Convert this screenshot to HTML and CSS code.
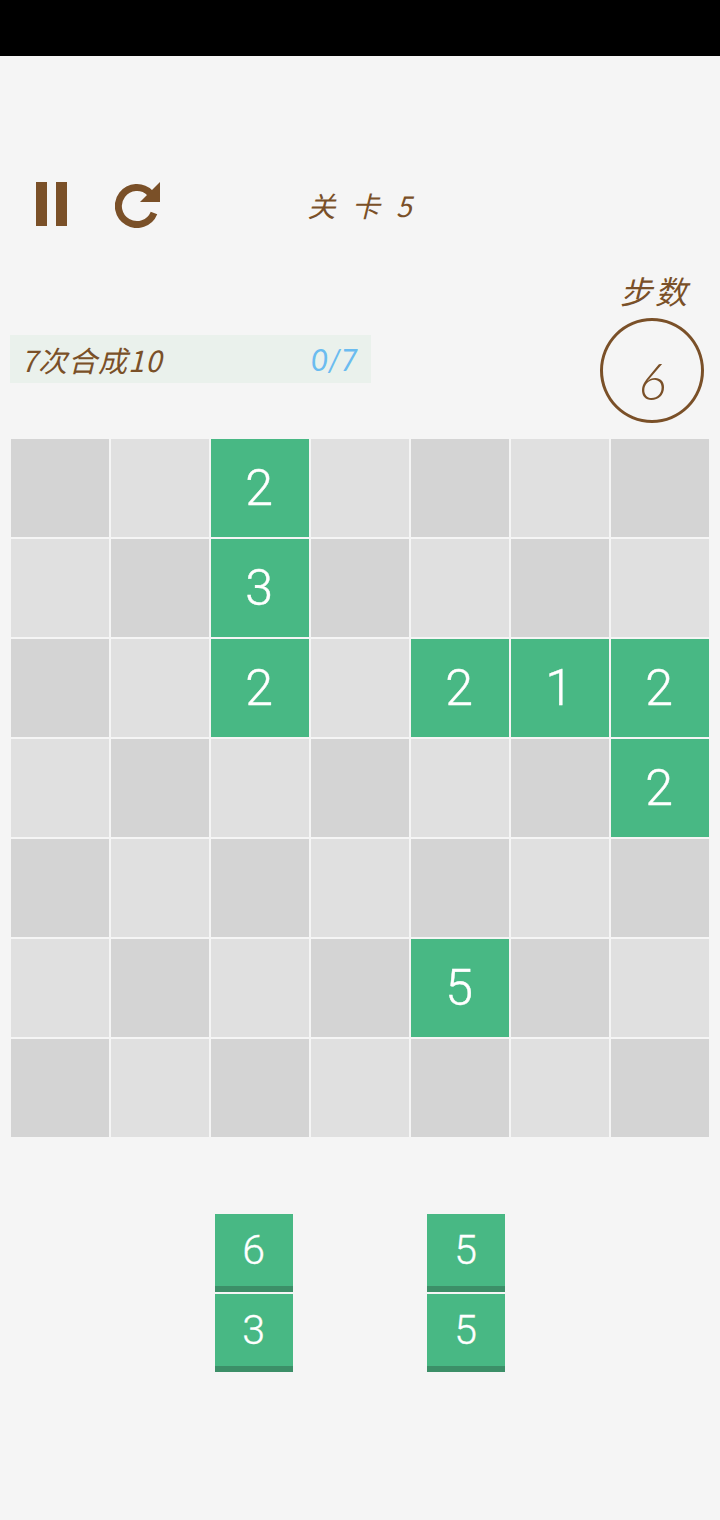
FILE: index.html
```html
<!DOCTYPE html>
<html lang="zh">
<head>
    <meta charset="UTF-8">
    <title>关卡 5</title>
    <link rel="stylesheet" href="styles.css">
</head>
<body>
    <div class="status-bar"></div>

    <div class="toolbar">
        <div class="toolbar-buttons">
            <div class="pause-button"><span></span><span></span></div>
            <svg class="restart-button" viewBox="0 0 46 46">
                <path d="M39 31A18.5 18.500 0 1 1 35 11" fill="none" stroke="#7a5028" stroke-width="7"/>
                <path d="M45 0V20H25z" fill="#7a5028"/>
            </svg>
        </div>
        <div class="level-title">关 卡 5</div>
    </div>

    <div class="stats">
        <div class="goal">
            <span class="goal-text">7次合成10</span>
            <span class="goal-count">0/7</span>
        </div>
        <div class="steps">
            <div class="steps-label">步数</div>
            <div class="steps-circle">6</div>
        </div>
    </div>

    <div class="board">
        <div class="cell dark"></div><div class="cell"></div><div class="cell green">2</div><div class="cell"></div><div class="cell dark"></div><div class="cell"></div><div class="cell dark"></div>
        <div class="cell"></div><div class="cell dark"></div><div class="cell green">3</div><div class="cell dark"></div><div class="cell"></div><div class="cell dark"></div><div class="cell"></div>
        <div class="cell dark"></div><div class="cell"></div><div class="cell green">2</div><div class="cell"></div><div class="cell green">2</div><div class="cell green">1</div><div class="cell green">2</div>
        <div class="cell"></div><div class="cell dark"></div><div class="cell"></div><div class="cell dark"></div><div class="cell"></div><div class="cell dark"></div><div class="cell green">2</div>
        <div class="cell dark"></div><div class="cell"></div><div class="cell dark"></div><div class="cell"></div><div class="cell dark"></div><div class="cell"></div><div class="cell dark"></div>
        <div class="cell"></div><div class="cell dark"></div><div class="cell"></div><div class="cell dark"></div><div class="cell green">5</div><div class="cell dark"></div><div class="cell"></div>
        <div class="cell dark"></div><div class="cell"></div><div class="cell dark"></div><div class="cell"></div><div class="cell dark"></div><div class="cell"></div><div class="cell dark"></div>
    </div>

    <div class="pieces">
        <div class="piece">
            <div class="tile">6</div>
            <div class="tile">3</div>
        </div>
        <div class="piece">
            <div class="tile">5</div>
            <div class="tile">5</div>
        </div>
    </div>
</body>
</html>
```

FILE: styles.css
```css
* {
    margin: 0;
    padding: 0;
    box-sizing: border-box;
}

body {
    width: 720px;
    height: 1520px;
    overflow: hidden;
    background: #f5f5f5;
    font-family: "Noto Sans CJK SC", sans-serif;
    color: #7a5028;
}

.status-bar {
    height: 56px;
    background: #000;
}

/* Top row */
.toolbar {
    display: grid;
    grid-template-columns: 1fr auto 1fr;
    align-items: center;
    height: 46px;
    margin-top: 126px;
    padding-left: 36px;
}

.toolbar-buttons {
    display: flex;
    align-items: flex-start;
    gap: 48px;
}

.pause-button {
    display: flex;
    gap: 9px;
}

.pause-button span {
    width: 11px;
    height: 44px;
    background: #7a5028;
}

.restart-button {
    width: 46px;
    height: 46px;
}

.level-title {
    font-size: 28px;
    font-style: italic;
    line-height: 46px;
    word-spacing: 4px;
    letter-spacing: 3px;
    white-space: nowrap;
    margin-left: -34px;
}

/* Goal and step counter */
.stats {
    display: flex;
    justify-content: space-between;
    align-items: flex-start;
    height: 172px;
    margin-top: 39px;
    padding: 0 16px 0 10px;
}

.goal {
    display: flex;
    justify-content: space-between;
    align-items: center;
    width: 361px;
    height: 48px;
    margin-top: 68px;
    padding: 0 13px 0 11px;
    background: #eaf1ec;
    font-size: 29px;
    font-style: italic;
}

.goal-text {
    letter-spacing: 1px;
}

.goal-count {
    color: #6bbcf0;
    font-family: "Lato", sans-serif;
    font-size: 30px;
}

.steps {
    display: flex;
    flex-direction: column;
    align-items: center;
}

.steps-label {
    font-size: 32px;
    font-style: italic;
    line-height: 46px;
    letter-spacing: 3px;
    margin-left: 6px;
}

.steps-circle {
    display: flex;
    justify-content: center;
    align-items: center;
    width: 104px;
    height: 105px;
    margin-top: 5px;
    padding-top: 18px;
    border: 3px solid #7a5028;
    border-radius: 50%;
    font-family: "Lato", sans-serif;
    font-size: 52px;
    font-style: italic;
    font-weight: 300;
}

/* Board */
.board {
    display: grid;
    grid-template-columns: repeat(7, 98px);
    grid-auto-rows: 98px;
    gap: 2px;
    width: 698px;
    margin-left: 11px;
}

.cell {
    display: flex;
    justify-content: center;
    align-items: center;
    padding-right: 2px;
    background: #e0e0e0;
    font-family: "Roboto", sans-serif;
    font-size: 50px;
    font-weight: 300;
    -webkit-text-stroke: 0.4px #fff;
}

.cell.dark {
    background: #d4d4d4;
}

.cell.green {
    background: #48b884;
    color: #fff;
}

/* Next pieces */
.pieces {
    display: flex;
    gap: 134px;
    margin: 77px 0 0 215px;
}

.piece {
    display: flex;
    flex-direction: column;
    gap: 2px;
}

.tile {
    display: flex;
    justify-content: center;
    align-items: center;
    width: 78px;
    height: 78px;
    padding-right: 1px;
    background: #48b884;
    border-bottom: 6px solid #3c8f68;
    color: #fff;
    font-family: "Roboto", sans-serif;
    font-size: 41px;
    font-weight: 300;
    -webkit-text-stroke: 0.3px #fff;
}
```
